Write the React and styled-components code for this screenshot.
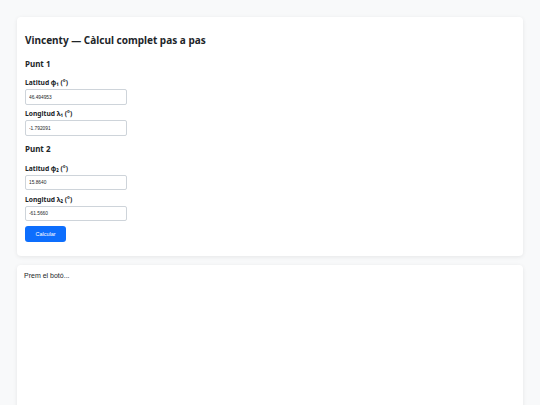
import React from "react";
import styled, { createGlobalStyle } from "styled-components";

const GlobalStyle = createGlobalStyle`
  html, body {
    margin: 0;
    padding: 0;
    background: #f8f9fa;
    color: #212529;
  }
  * { box-sizing: border-box; }
`;

const Page = styled.div`
  padding: 17px;
  display: flex;
  flex-direction: column;
  gap: 9px;
`;

const Card = styled.div`
  background: #fff;
  border-radius: 4px;
  box-shadow: 0 1px 4px rgba(0, 0, 0, 0.08);
  padding: ${(p) => p.$pad || "17px 8px 14px"};
  min-height: ${(p) => p.$minHeight || "auto"};
`;

const Title = styled.h2`
  margin: 0;
  font-family: "Noto Sans", "Open Sans", sans-serif;
  font-size: 10px;
  line-height: 13px;
  font-weight: 700;
  color: #212529;
`;

// margins collapse with the field above, so $top is the full gap
const Section = styled.h3`
  margin: ${(p) => p.$top} 0 9.5px;
  font-family: "Noto Sans", "Open Sans", sans-serif;
  font-size: 8px;
  line-height: 11px;
  font-weight: 700;
  color: #212529;
`;

const Field = styled.div`
  display: flex;
  flex-direction: column;
  gap: 2.2px;
  margin-bottom: 4.3px;
`;

const Label = styled.label`
  font-family: "Noto Sans", "Open Sans", sans-serif;
  font-size: 6.7px;
  line-height: 9px;
  font-weight: 700;
  color: #212529;
`;

const Input = styled.input`
  width: 102px;
  height: 15.5px;
  padding: 0 3px;
  border: 1px solid #ced4da;
  border-radius: 2px;
  font-family: "Liberation Sans", Arial, sans-serif;
  font-size: 4.8px;
  color: #212529;
  background: #fff;
  outline: none;
`;

const Button = styled.button`
  display: block;
  margin-top: 5px;
  width: 41px;
  height: 16px;
  padding: 0;
  border: none;
  border-radius: 3px;
  background: #0d6efd;
  color: #fff;
  font-family: "Liberation Sans", Arial, sans-serif;
  font-size: 5.5px;
  cursor: pointer;
`;

const Output = styled.div`
  font-family: "Liberation Sans", Arial, sans-serif;
  font-size: 7px;
  line-height: 10px;
  color: #212529;
`;

const points = [
  { name: "Punt 1", lat: "46.494953", lon: "-1.792091", sub: "₁" },
  { name: "Punt 2", lat: "15.8640", lon: "-61.5660", sub: "₂" },
];

const App = () => (
  <>
    <GlobalStyle />
    <Page>
      <Card $pad="17px 8px 13.5px">
        <Title>Vincenty — Càlcul complet pas a pas</Title>
        {points.map((pt, i) => (
          <div key={pt.name}>
            <Section $top={i === 0 ? "10.6px" : "7.5px"}>{pt.name}</Section>
            <Field>
              <Label>Latitud φ{pt.sub} (°)</Label>
              <Input defaultValue={pt.lat} />
            </Field>
            <Field>
              <Label>Longitud λ{pt.sub} (°)</Label>
              <Input defaultValue={pt.lon} />
            </Field>
          </div>
        ))}
        <Button>Calcular</Button>
      </Card>
      <Card $pad="6px 7px" $minHeight="200px">
        <Output>Prem el botó...</Output>
      </Card>
    </Page>
  </>
);

export default App;
